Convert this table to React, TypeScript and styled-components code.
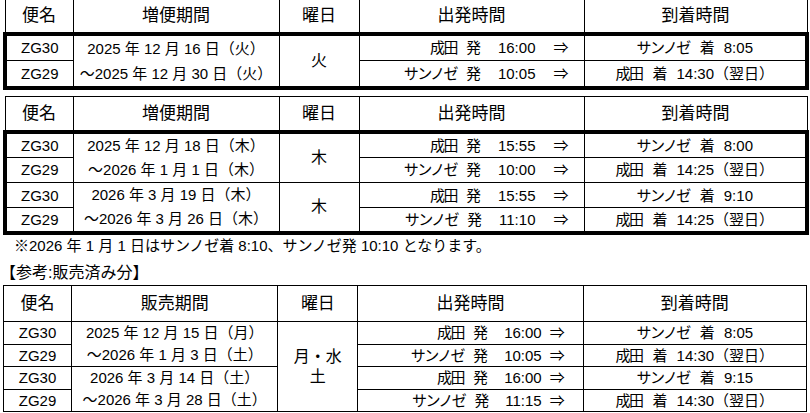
import React from "react";
import styled, { createGlobalStyle } from "styled-components";

type Flight = { no: string; from: string; dep: string; to: string; arr: string };
type Block = {
  period: [string, string];
  flights: [Flight, Flight];
  day?: { lines: string[]; span: number };
};

const outbound = (dep: string, arr: string): Flight => ({
  no: "ZG30",
  from: "成田",
  dep,
  to: "サンノゼ",
  arr,
});
const inbound = (dep: string, arr: string): Flight => ({
  no: "ZG29",
  from: "サンノゼ",
  dep,
  to: "成田",
  arr: `${arr}（翌日）`,
});

const first: Block[] = [
  {
    period: ["2025 年 12 月 16 日（火）", "～2025 年 12 月 30 日（火）"],
    flights: [outbound("16:00", "8:05"), inbound("10:05", "14:30")],
    day: { lines: ["火"], span: 2 },
  },
];

const second: Block[] = [
  {
    period: ["2025 年 12 月 18 日（木）", "～2026 年 1 月 1 日（木）"],
    flights: [outbound("15:55", "8:00"), inbound("10:00", "14:25")],
    day: { lines: ["木"], span: 2 },
  },
  {
    period: ["2026 年 3 月 19 日（木）", "～2026 年 3 月 26 日（木）"],
    flights: [outbound("15:55", "9:10"), inbound("11:10", "14:25")],
    day: { lines: ["木"], span: 2 },
  },
];

const sold: Block[] = [
  {
    period: ["2025 年 12 月 15 日（月）", "～2026 年 1 月 3 日（土）"],
    flights: [outbound("16:00", "8:05"), inbound("10:05", "14:30")],
    day: { lines: ["月・水", "土"], span: 4 },
  },
  {
    period: ["2026 年 3 月 14 日（土）", "～2026 年 3 月 28 日（土）"],
    flights: [outbound("16:00", "9:15"), inbound("11:15", "14:30")],
  },
];

const widths = [68, 206, 80, 225, 223];

const GlobalStyle = createGlobalStyle`
  html, body {
    margin: 0;
    padding: 0;
    background: #fff;
  }
  body {
    font-family: "Liberation Sans", "Noto Sans CJK JP", sans-serif;
    color: #000;
  }
`;

const Page = styled.div`
  width: 810px;
  height: 413px;
  overflow: hidden;
  display: flex;
  flex-direction: column;
`;

const Table = styled.table<{ $gap: number }>`
  border-collapse: collapse;
  table-layout: fixed;
  width: 804px;
  margin: ${(p) => p.$gap}px 0 0 3px;
`;

const Col = styled.col<{ $w: number }>`
  width: ${(p) => p.$w}px;
`;

const Body = styled.tbody<{ $thick?: boolean }>`
  border: ${(p) => (p.$thick ? "4px solid #000" : "1px solid #000")};
`;

const Row = styled.tr<{ $h: number }>`
  height: ${(p) => p.$h}px;
`;

const Head = styled.th`
  border: 1px solid #000;
  padding: 0;
  font-size: 17px;
  font-weight: normal;
  text-align: center;
  vertical-align: middle;
  line-height: 1;
`;

const Cell = styled.td`
  border: 1px solid #000;
  padding: 0;
  font-size: 15px;
  text-align: center;
  vertical-align: middle;
  line-height: 1;
  white-space: nowrap;
`;

const Period = styled(Cell)<{ $line: number }>`
  line-height: ${(p) => p.$line}px;
`;

const Day = styled(Cell)`
  font-size: 16px;
  line-height: 20px;
`;

const Place = styled.span`
  letter-spacing: -1.5px;
`;

const Dep = styled.div<{ $tight?: boolean }>`
  display: flex;
  justify-content: flex-end;
  align-items: center;
  padding-right: ${(p) => (p.$tight ? 18 : 15)}px;

  & > span:nth-child(1) {
    margin-right: 9px;
  }
  & > span:nth-child(2) {
    margin-right: ${(p) => (p.$tight ? 16 : 17)}px;
  }
  & > span:nth-child(3) {
    margin-right: ${(p) => (p.$tight ? 8 : 18)}px;
  }
`;

const Arr = styled.div`
  display: flex;
  justify-content: center;
  align-items: center;

  & > span:nth-child(1) {
    margin-right: 10px;
  }
  & > span:nth-child(2) {
    margin-right: 9px;
  }
`;

const Note = styled.div`
  font-size: 15px;
  line-height: 19px;
  margin-top: 1px;
  padding-left: 14px;
`;

const Caption = styled.div`
  font-size: 16px;
  line-height: 20px;
  margin-top: 8px;
`;

type TableProps = {
  title: string;
  blocks: Block[];
  thick?: boolean;
  gap: number;
  headH: number;
  rowH: number;
  tight?: boolean;
};

const Schedule = ({ title, blocks, thick, gap, headH, rowH, tight }: TableProps) => (
  <Table $gap={gap}>
    <colgroup>
      {widths.map((w, i) => (
        <Col key={i} $w={w} />
      ))}
    </colgroup>
    <thead>
      <Row $h={headH}>
        <Head>便名</Head>
        <Head>{title}</Head>
        <Head>曜日</Head>
        <Head>出発時間</Head>
        <Head>到着時間</Head>
      </Row>
    </thead>
    <Body $thick={thick}>
      {blocks.map((b, bi) =>
        b.flights.map((f, fi) => (
          <Row key={`${bi}-${fi}`} $h={rowH}>
            <Cell>{f.no}</Cell>
            {fi === 0 && (
              <Period rowSpan={2} $line={Math.floor(rowH)}>
                {b.period[0]}
                <br />
                {b.period[1]}
              </Period>
            )}
            {fi === 0 && b.day && (
              <Day rowSpan={b.day.span}>
                {b.day.lines.map((l, li) => (
                  <div key={li}>{l}</div>
                ))}
              </Day>
            )}
            <Cell>
              <Dep $tight={tight}>
                <Place>{f.from}</Place>
                <span>発</span>
                <span>{f.dep}</span>
                <span>⇒</span>
              </Dep>
            </Cell>
            <Cell>
              <Arr>
                <Place>{f.to}</Place>
                <span>着</span>
                <span>{f.arr}</span>
              </Arr>
            </Cell>
          </Row>
        ))
      )}
    </Body>
  </Table>
);

export default function App() {
  return (
    <Page>
      <GlobalStyle />
      <Schedule title="増便期間" blocks={first} thick gap={-1} headH={34} rowH={25} />
      <Schedule title="増便期間" blocks={second} thick gap={6} headH={36} rowH={24} />
      <Note>※2026 年 1 月 1 日はサンノゼ着 8:10、サンノゼ発 10:10 となります。</Note>
      <Caption>【参考:販売済み分】</Caption>
      <Schedule
        title="販売期間"
        blocks={sold}
        gap={2}
        headH={36}
        rowH={22.5}
        tight
      />
    </Page>
  );
}
